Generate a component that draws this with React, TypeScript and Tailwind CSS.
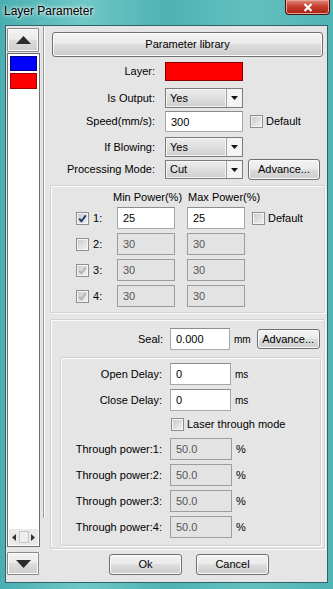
import React from 'react'

type CheckState = 'on' | 'off' | 'dis'

function Btn({ children, className = '' }: { children: React.ReactNode; className?: string }) {
  return (
    <div
      className={`flex items-center justify-center rounded-[3px] border border-[#707070] bg-[linear-gradient(#f3f3f3,#ebebeb_45%,#dcdcdc_52%,#cdcdcd)] shadow-[inset_0_0_0_1px_#fafafa] text-[11px] text-black ${className}`}
    >
      {children}
    </div>
  )
}

function Check({ state = 'off' }: { state?: CheckState }) {
  return (
    <div className="relative h-[13px] w-[13px] shrink-0 border border-[#8e8f8f] bg-[linear-gradient(135deg,#c9c9c9,#f3f3f3)] shadow-[inset_0_0_0_1px_#f4f4f4]">
      {state !== 'off' && (
        <svg viewBox="0 0 11 11" className="absolute inset-0 h-[11px] w-[11px]">
          <path
            d="M2.2 5.6 L4.4 8.2 L8.8 2.4"
            fill="none"
            stroke={state === 'on' ? '#1d3a72' : '#b4b4b4'}
            strokeWidth="1.9"
          />
        </svg>
      )}
    </div>
  )
}

function Select({ value, className = '' }: { value: string; className?: string }) {
  return (
    <div className={`flex w-[78px] border border-[#7b7b7b] bg-[#f4f4f4] ${className}`}>
      <div className="m-[1px] flex flex-1 items-center bg-[linear-gradient(#ececec,#d0d0d0)] pl-[3px] text-[11px] text-black">
        {value}
      </div>
      <div className="flex w-[16px] items-center justify-center border-l border-[#a3a3a3]">
        <svg viewBox="0 0 7 4" className="h-[4px] w-[7px]">
          <path d="M0 0 H7 L3.5 4 Z" fill="#111" />
        </svg>
      </div>
    </div>
  )
}

function Field({ value, disabled = false, className = '' }: { value: string; disabled?: boolean; className?: string }) {
  return (
    <div
      className={`flex items-start pl-[5px] pt-[2px] text-[11px] ${
        disabled
          ? 'border border-[#9d9d9d] bg-[#e3e3e3] text-[#555]'
          : 'border border-[#a5a9ae] border-t-[#8a8e93] bg-white text-black'
      } ${className}`}
    >
      {value}
    </div>
  )
}

function Group({ children, className = '' }: { children: React.ReactNode; className?: string }) {
  return (
    <div className={`rounded-[2px] border border-[#cdd3d7] shadow-[inset_1px_1px_0_#fbfbfb,1px_1px_0_#fbfbfb] ${className}`}>
      {children}
    </div>
  )
}

const powers = [
  { n: 1, min: '25', max: '25', state: 'on' as CheckState, dis: false },
  { n: 2, min: '30', max: '30', state: 'off' as CheckState, dis: true },
  { n: 3, min: '30', max: '30', state: 'dis' as CheckState, dis: true },
  { n: 4, min: '30', max: '30', state: 'dis' as CheckState, dis: true },
]

export default function App() {
  return (
    <div className="flex h-[589px] w-[333px] flex-col bg-[linear-gradient(90deg,#4aaeb1,#6fc8c6_25%,#4fb2b3_50%,#63c0bf_75%,#52b3b4)] font-['Liberation_Sans',Arial,sans-serif]">
      {/* title bar */}
      <div className="flex h-[25px] shrink-0 items-start justify-between">
        <span className="ml-[4px] mt-[3px] text-[12px] leading-[16px] text-black [text-shadow:0_0_5px_#fff,0_0_3px_#fff]">
          Layer Parameter
        </span>
        <div className="mr-[3px] flex h-[15px] w-[45px] items-center justify-center rounded-b-[4px] border border-t-0 border-[#4a1410] bg-[linear-gradient(#e08a7c,#c7402f_45%,#a82010)] shadow-[inset_0_0_0_1px_#e9a49a]">
          <svg viewBox="0 0 10 9" className="h-[9px] w-[10px]">
            <path d="M1.5 1 L8.5 8 M8.5 1 L1.5 8" stroke="#fff" strokeWidth="2.2" />
          </svg>
        </div>
      </div>

      {/* client area */}
      <div className="mx-[5px] mb-[6px] flex flex-1 border border-[#2f6367] bg-[#e5e5e5]">
        {/* layer list */}
        <div className="flex w-[37px] shrink-0 flex-col pl-[1px]">
          <Btn className="mt-[2px] h-[24px] w-[32px] !rounded-[1px] !border-[#8a8a8a]">
            <svg viewBox="0 0 15 8" className="h-[8px] w-[15px]">
              <path d="M0 8 L7.5 0 L15 8 Z" fill="#2b2b2b" />
            </svg>
          </Btn>
          <div className="mt-[1px] flex w-[33px] flex-1 flex-col border border-[#6e6e6e] bg-white p-[1px]">
            <div className="mx-[1px] mt-[1px] h-[15px] border border-[#00008a] bg-[#0000ff]" />
            <div className="mx-[1px] mt-[2px] h-[16px] border border-[#a00000] bg-[#ff0000]" />
            <div className="flex-1" />
            <div className="flex h-[16px] items-center justify-between bg-[#e9e9e9] px-[3px]">
              <svg viewBox="0 0 4 7" className="h-[7px] w-[4px]">
                <path d="M4 0 L0 3.5 L4 7 Z" fill="#333" />
              </svg>
              <div className="h-[12px] w-[10px] border border-[#c7c7c7] bg-[#eeeeee]" />
              <svg viewBox="0 0 4 7" className="h-[7px] w-[4px]">
                <path d="M0 0 L4 3.5 L0 7 Z" fill="#333" />
              </svg>
            </div>
          </div>
          <Btn className="mb-[7px] mt-[5px] h-[23px] w-[32px] !rounded-[1px] !border-[#8a8a8a]">
            <svg viewBox="0 0 15 8" className="h-[8px] w-[15px]">
              <path d="M0 0 L15 0 L7.5 8 Z" fill="#2b2b2b" />
            </svg>
          </Btn>
        </div>

        {/* splitter */}
        <div className="h-[492px] w-[2px] border-l border-r border-l-[#9a9a9a] border-r-white" />

        {/* parameters */}
        <div className="flex flex-1 flex-col text-[11px] text-black">
          <Btn className="ml-[7px] mr-[4px] mt-[6px] h-[25px]">Parameter library</Btn>

          <div className="mt-[5px] flex h-[19px] items-center">
            <span className="w-[110px] text-right">Layer:</span>
            <div className="ml-[10px] h-[19px] w-[78px] border border-[#8a0000] bg-[#ff0000]" />
          </div>
          <div className="mt-[7px] flex h-[20px] items-center">
            <span className="w-[110px] text-right">Is Output:</span>
            <Select value="Yes" className="ml-[10px] h-[20px]" />
          </div>
          <div className="mt-[3px] flex h-[21px] items-center">
            <span className="w-[110px] text-right">Speed(mm/s):</span>
            <Field value="300" className="ml-[10px] h-[21px] w-[78px]" />
            <div className="ml-[7px]">
              <Check />
            </div>
            <span className="ml-[3px]">Default</span>
          </div>
          <div className="mt-[5px] flex h-[20px] items-center">
            <span className="w-[110px] text-right">If Blowing:</span>
            <Select value="Yes" className="ml-[10px] h-[20px]" />
          </div>
          <div className="mt-[2px] flex h-[21px] items-center">
            <span className="w-[110px] text-right">Processing Mode:</span>
            <Select value="Cut" className="ml-[10px] h-[19px]" />
            <Btn className="ml-[5px] h-[21px] w-[72px]">Advance...</Btn>
          </div>

          {/* power group */}
          <Group className="ml-[5px] mr-[2px] mt-[5px] flex h-[128px] flex-col">
            <div className="mt-[4px] flex h-[14px] items-center">
              <span className="ml-[62px]">Min Power(%)</span>
              <span className="ml-[6px]">Max Power(%)</span>
            </div>
            {powers.map((p) => (
              <div key={p.n} className={`flex h-[22px] items-center ${p.n === 1 ? 'mt-[3px]' : 'mt-[4px]'}`}>
                <div className="ml-[25px]">
                  <Check state={p.state} />
                </div>
                <span className="ml-[4px] w-[24px]">{p.n}:</span>
                <Field value={p.min} disabled={p.dis} className="h-[22px] w-[58px]" />
                <Field value={p.max} disabled={p.dis} className="ml-[12px] h-[22px] w-[58px]" />
                {p.n === 1 && (
                  <>
                    <div className="ml-[7px]">
                      <Check />
                    </div>
                    <span className="ml-[3px]">Default</span>
                  </>
                )}
              </div>
            ))}
          </Group>

          {/* seal / delay group */}
          <Group className="ml-[5px] mr-[2px] mt-[6px] flex flex-1 flex-col">
            <div className="mt-[8px] flex h-[22px] items-center">
              <span className="w-[112px] text-right">Seal:</span>
              <Field value="0.000" className="ml-[7px] h-[22px] w-[60px]" />
              <span className="ml-[4px] text-[10px]">mm</span>
              <Btn className="ml-[6px] h-[20px] w-[63px]">Advance...</Btn>
            </div>
            <Group className="mb-[2px] ml-[9px] mr-[3px] mt-[7px] flex flex-1 flex-col">
              <div className="mt-[5px] flex h-[22px] items-center">
                <span className="w-[101px] text-right">Open Delay:</span>
                <Field value="0" className="ml-[8px] h-[22px] w-[61px]" />
                <span className="ml-[4px] text-[10px]">ms</span>
              </div>
              <div className="mt-[4px] flex h-[22px] items-center">
                <span className="w-[101px] text-right">Close Delay:</span>
                <Field value="0" className="ml-[8px] h-[22px] w-[61px]" />
                <span className="ml-[4px] text-[10px]">ms</span>
              </div>
              <div className="mt-[7px] flex h-[13px] items-center">
                <div className="ml-[110px]">
                  <Check />
                </div>
                <span className="ml-[3px]">Laser through mode</span>
              </div>
              {[1, 2, 3, 4].map((n) => (
                <div key={n} className={`flex h-[22px] items-center ${n === 1 ? 'mt-[7px]' : 'mt-[4px]'}`}>
                  <span className="w-[101px] text-right">Through power:{n}:</span>
                  <Field value="50.0" disabled className="ml-[8px] h-[22px] w-[62px]" />
                  <span className="ml-[4px]">%</span>
                </div>
              ))}
            </Group>
          </Group>

          <div className="mb-[7px] mt-[5px] flex justify-center gap-[14px] pl-[6px]">
            <Btn className="h-[21px] w-[73px]">Ok</Btn>
            <Btn className="h-[21px] w-[73px]">Cancel</Btn>
          </div>
        </div>
      </div>
    </div>
  )
}
